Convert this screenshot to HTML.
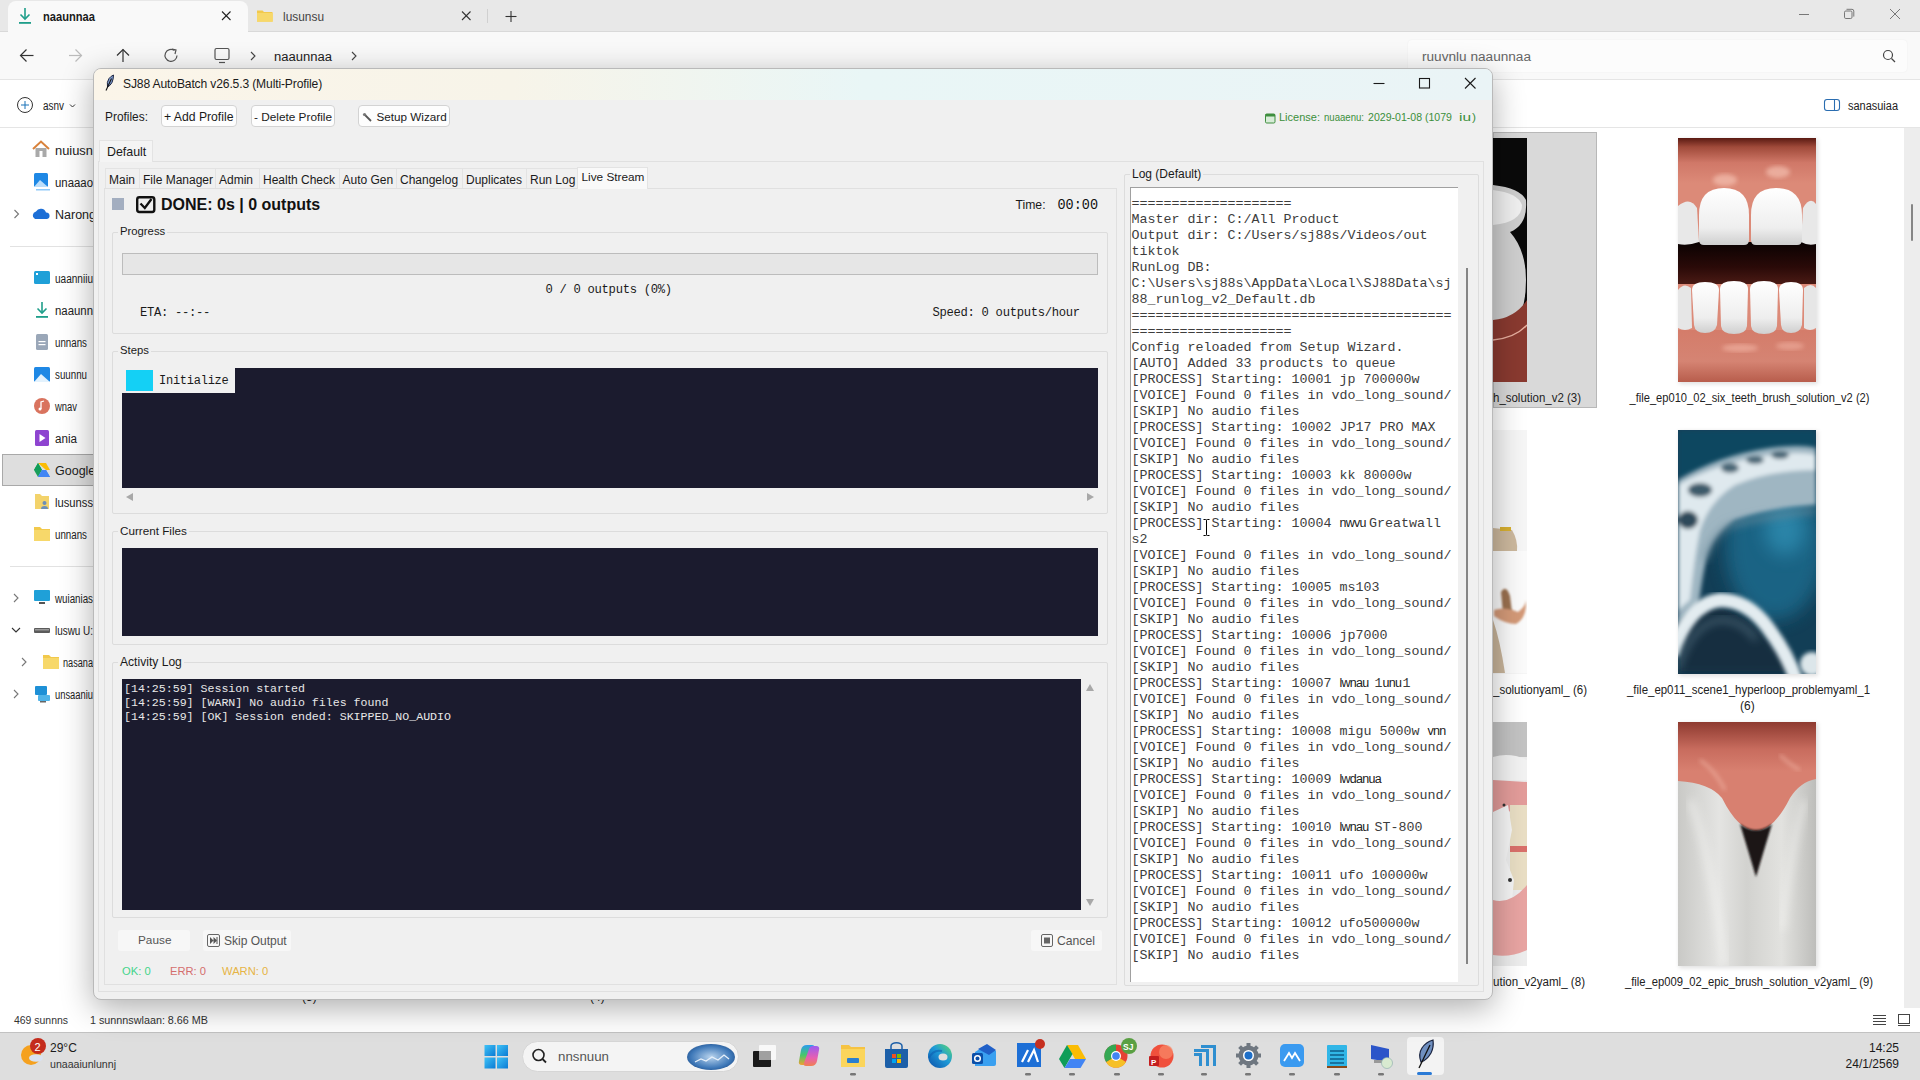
<!DOCTYPE html>
<html><head><meta charset="utf-8">
<style>
*{box-sizing:border-box;margin:0;padding:0}
html,body{width:1920px;height:1080px;overflow:hidden;background:#fff;font-family:"Liberation Sans",sans-serif;color:#1a1a1a}
.a{position:absolute}
.t{position:absolute;white-space:pre;line-height:1}
.mono{font-family:"Liberation Mono",monospace}
svg{position:absolute;overflow:visible}
.btn{background:#fdfdfd;border:1px solid #d3d3d3;border-radius:4px}
.grp{border:1px solid #dcdcdc;border-radius:2px}
.th{display:inline-block;font-family:"Liberation Sans",sans-serif;font-size:12.5px;line-height:0;vertical-align:baseline;letter-spacing:-0.7px;white-space:nowrap;color:#222}
.lbl{background:#f0f0f0;padding:0 2px}
</style></head><body>
<!-- ============ EXPLORER BACKGROUND ============ -->
<div class="a" style="left:0;top:0;width:1920px;height:32px;background:#e8e8e8"></div>
<div class="a" style="left:0;top:31px;width:1920px;height:1px;background:#d9d9d9"></div>
<div class="a" style="left:8px;top:1px;width:240px;height:32px;background:#f9f9f9;border-radius:8px 8px 0 0"></div>
<div class="a" style="left:0;top:32px;width:1920px;height:48px;background:#f9f9f9;border-bottom:1px solid #e5e5e5"></div>
<div class="a" style="left:0;top:80px;width:1920px;height:48px;background:#fff;border-bottom:1px solid #e5e5e5"></div>
<div class="a" style="left:1408px;top:40px;width:499px;height:32px;background:#fcfcfc;border-radius:4px;box-shadow:0 0 2px rgba(0,0,0,.06)"></div>
<!-- sidebar -->
<div class="a" style="left:0;top:128px;width:100px;height:877px;background:#fff"></div>
<div class="a" style="left:2px;top:456px;width:98px;height:28px;background:#e6e6e6;border-radius:4px"></div>
<!-- content -->
<div class="a" style="left:1493px;top:128px;width:427px;height:877px;background:#fff"></div>
<!-- status bar -->
<div class="a" style="left:0;top:1005px;width:1920px;height:27px;background:#fff"></div>
<!-- taskbar -->
<div class="a" style="left:0;top:1032px;width:1920px;height:48px;background:#dedede;border-top:1px solid #c2c2c2"></div>


<!-- explorer chrome icons -->
<svg style="left:0;top:0" width="1920" height="1080">
<!-- tab1 download icon -->
<g stroke="#1f9e8a" stroke-width="1.6" fill="none"><line x1="25" y1="8" x2="25" y2="19"/><path d="M20.5 14.5 L25 19 L29.5 14.5"/></g>
<rect x="19" y="22" width="12" height="1.8" fill="#1f9e8a"/>
<text x="43" y="21" font-family="Liberation Sans" font-size="12.5" font-weight="bold" fill="#1a1a1a" textLength="52" lengthAdjust="spacingAndGlyphs">naaunnaa</text>
<g stroke="#222" stroke-width="1.1"><line x1="222" y1="11.5" x2="230.5" y2="20"/><line x1="230.5" y1="11.5" x2="222" y2="20"/></g>
<!-- tab2 -->
<path d="M257 10.5 h5.5 l1.5 1.5 h8.5 v9.5 h-15.5 z" fill="#f2c94c"/><rect x="257" y="13" width="15.8" height="8.8" fill="#f7d86a"/>
<text x="283" y="21" font-family="Liberation Sans" font-size="12.5" fill="#444" textLength="41" lengthAdjust="spacingAndGlyphs">lusunsu</text>
<g stroke="#333" stroke-width="1.1"><line x1="462" y1="11.5" x2="470.5" y2="20"/><line x1="470.5" y1="11.5" x2="462" y2="20"/></g>
<line x1="487.5" y1="9" x2="487.5" y2="23" stroke="#d0d0d0" stroke-width="1"/>
<g stroke="#333" stroke-width="1.1"><line x1="511" y1="11" x2="511" y2="22"/><line x1="505.5" y1="16.5" x2="516.5" y2="16.5"/></g>
<!-- window controls -->
<line x1="1799" y1="14.5" x2="1809" y2="14.5" stroke="#777" stroke-width="1"/>
<rect x="1844.5" y="11" width="7.5" height="7.5" rx="1.3" fill="none" stroke="#777" stroke-width="1"/><path d="M1846.5 9.3 h5.5 a1.8 1.8 0 0 1 1.8 1.8 v5.5" fill="none" stroke="#777" stroke-width="1"/>
<g stroke="#777" stroke-width="1"><line x1="1890" y1="9" x2="1900" y2="19"/><line x1="1900" y1="9" x2="1890" y2="19"/></g>
<!-- nav row -->
<g stroke="#333" stroke-width="1.2" fill="none">
<line x1="21" y1="55.5" x2="33.5" y2="55.5"/><path d="M26.5 49.5 L20.5 55.5 L26.5 61.5"/>
<line x1="123" y1="49.5" x2="123" y2="62"/><path d="M117 55.5 L123 49.5 L129 55.5"/>
</g>
<g stroke="#bbb" stroke-width="1.2" fill="none"><line x1="69" y1="55.5" x2="81.5" y2="55.5"/><path d="M75.5 49.5 L81.5 55.5 L75.5 61.5"/></g>
<g stroke="#555" stroke-width="1.2" fill="none"><path d="M177 55.5 A6 6 0 1 1 174.5 50.5"/><path d="M172 49 L176 50 L175 54"/></g>
<g stroke="#555" stroke-width="1.2" fill="none"><rect x="215" y="48.5" width="14" height="11" rx="1.5"/><line x1="219" y1="62.5" x2="225" y2="62.5"/></g>
<g stroke="#444" stroke-width="1.1" fill="none"><path d="M251 52 L255 56 L251 60"/><path d="M352 52 L356 56 L352 60"/></g>
<text x="274" y="61" font-family="Liberation Sans" font-size="12.5" fill="#222" textLength="58" lengthAdjust="spacingAndGlyphs">naaunnaa</text>
<!-- search -->
<text x="1422" y="61" font-family="Liberation Sans" font-size="12.5" fill="#666" textLength="109" lengthAdjust="spacingAndGlyphs">ruuvnlu naaunnaa</text>
<g stroke="#444" stroke-width="1.2" fill="none"><circle cx="1888" cy="55" r="4.5"/><line x1="1891.5" y1="58.5" x2="1895" y2="62"/></g>
<!-- command bar -->
<g stroke="#333" stroke-width="1" fill="none"><circle cx="25" cy="105" r="7.5"/><line x1="25" y1="101" x2="25" y2="109" stroke="#1a73b8"/><line x1="21" y1="105" x2="29" y2="105" stroke="#1a73b8"/><path d="M70 104.5 L72.5 107 L75 104.5"/></g>
<text x="43" y="110" font-family="Liberation Sans" font-size="12" fill="#222" textLength="21" lengthAdjust="spacingAndGlyphs">asnv</text>
<g stroke="#2a6db0" stroke-width="1.1" fill="none"><rect x="1824.5" y="99.5" width="15" height="11" rx="2.5"/><line x1="1834.5" y1="99.5" x2="1834.5" y2="110.5"/></g>
<text x="1848" y="110" font-family="Liberation Sans" font-size="12" fill="#222" textLength="50" lengthAdjust="spacingAndGlyphs">sanasuiaa</text>
</svg>
<!-- sidebar -->
<svg style="left:0;top:0" width="1920" height="1080">
<!-- home -->
<path d="M33 149 L41 141.5 L49 149" fill="none" stroke="#d9823b" stroke-width="2"/><rect x="35.5" y="148" width="11" height="9" fill="#a9a9a9"/><rect x="39.5" y="151" width="3" height="6" fill="#fff"/>
<text x="55" y="155" font-family="Liberation Sans" font-size="12" fill="#222" textLength="38" lengthAdjust="spacingAndGlyphs">nuiusn</text>
<!-- gallery -->
<rect x="34" y="173" width="14" height="14" rx="1.5" fill="#1e88e5"/><path d="M34 187 L40 180 L48 187 Z" fill="#bbdefb"/><rect x="36" y="189" width="14" height="1.5" fill="#90caf9"/>
<text x="55" y="187" font-family="Liberation Sans" font-size="12" fill="#222" textLength="38" lengthAdjust="spacingAndGlyphs">unaaao</text>
<!-- onedrive -->
<path d="M14.5 210 L18.5 214 L14.5 218" fill="none" stroke="#777" stroke-width="1.1"/>
<path d="M35 219 a4 4 0 0 1 1-7.5 a5.5 5.5 0 0 1 10 1 a3.3 3.3 0 0 1 1 6.5 z" fill="#1d6fd6"/>
<text x="55" y="219" font-family="Liberation Sans" font-size="12.5" fill="#222">Narong</text>
<line x1="10" y1="246.5" x2="93" y2="246.5" stroke="#e2e2e2"/>
<!-- desktop -->
<rect x="34" y="271" width="16" height="13" rx="1.5" fill="#1fa0d8"/><rect x="36" y="273" width="2" height="2" fill="#fff"/>
<text x="55" y="283" font-family="Liberation Sans" font-size="12" fill="#222" textLength="38" lengthAdjust="spacingAndGlyphs">uaanniiu</text>
<!-- downloads -->
<g stroke="#1f9e8a" stroke-width="1.6" fill="none"><line x1="42" y1="302" x2="42" y2="313"/><path d="M37.5 308.5 L42 313 L46.5 308.5"/></g><rect x="36" y="316" width="12" height="1.8" fill="#1f9e8a"/>
<text x="55" y="315" font-family="Liberation Sans" font-size="12" fill="#222" textLength="38" lengthAdjust="spacingAndGlyphs">naaunn</text>
<!-- documents -->
<rect x="36" y="334" width="12" height="16" rx="1.5" fill="#9aa7b8"/><rect x="38.5" y="341" width="7" height="1.2" fill="#fff"/><rect x="38.5" y="344" width="7" height="1.2" fill="#fff"/>
<text x="55" y="347" font-family="Liberation Sans" font-size="12" fill="#222" textLength="32" lengthAdjust="spacingAndGlyphs">unnans</text>
<!-- pictures -->
<rect x="34" y="367" width="16" height="15" rx="1.5" fill="#1e88e5"/><path d="M34 382 L41 374 L50 382 Z" fill="#e3f2fd"/>
<text x="55" y="379" font-family="Liberation Sans" font-size="12" fill="#222" textLength="32" lengthAdjust="spacingAndGlyphs">suunnu</text>
<!-- music -->
<circle cx="42" cy="406" r="8" fill="#d9735e"/><path d="M41 409 v-7 l3 -1" fill="none" stroke="#fff" stroke-width="1.3"/><circle cx="40" cy="409" r="1.5" fill="#fff"/>
<text x="55" y="411" font-family="Liberation Sans" font-size="12" fill="#222" textLength="22" lengthAdjust="spacingAndGlyphs">wnav</text>
<!-- videos -->
<rect x="35" y="430" width="14" height="16" rx="1.5" fill="#8e44d0"/><path d="M39.5 434 L45.5 438 L39.5 442 Z" fill="#fff"/>
<text x="55" y="443" font-family="Liberation Sans" font-size="12" fill="#222" textLength="22" lengthAdjust="spacingAndGlyphs">ania</text>
</svg>
<div class="a" style="left:2px;top:454px;width:95px;height:32px;background:#dedede;border:1px solid #a9a9a9"></div>
<svg style="left:0;top:0" width="1920" height="1080">
<!-- google drive -->
<path d="M38 463 L46 463 L50 470 L46 470 Z" fill="#fbbc04"/><path d="M38 463 L34 470 L38 477 L42 470 Z" fill="#1a9e5c"/><path d="M38 477 L50 477 L46 470 L42 470 Z" fill="#4285f4"/><path d="M42 470 L46 470 L50 477 L38 477 Z" fill="#4285f4"/><path d="M34 470 L42 470 L38 463 Z" fill="#0f9d58"/><path d="M46 463 L50 470 L54 470" fill="none"/>
<text x="55" y="475" font-family="Liberation Sans" font-size="12.5" fill="#222">Google</text>
<!-- programs folder w/ person -->
<path d="M35 494 h5 l2 2 h7 v13 h-14 z" fill="#f3d36b"/><circle cx="44.5" cy="503" r="2" fill="#6c8fb8"/><path d="M41 509 a3.5 3 0 0 1 7 0 z" fill="#6c8fb8"/>
<text x="55" y="507" font-family="Liberation Sans" font-size="12" fill="#222" textLength="38" lengthAdjust="spacingAndGlyphs">lusunss</text>
<!-- documents folder -->
<path d="M34 527 h6 l2 2 h8 v12 h-16 z" fill="#f2c94c"/><rect x="34" y="530" width="16" height="11" fill="#f7d86a"/>
<text x="55" y="539" font-family="Liberation Sans" font-size="12" fill="#222" textLength="32" lengthAdjust="spacingAndGlyphs">unnans</text>
<line x1="10" y1="566.5" x2="93" y2="566.5" stroke="#e2e2e2"/>
<!-- this pc -->
<path d="M14 594 L18 598 L14 602" fill="none" stroke="#777" stroke-width="1.1"/>
<rect x="34" y="590" width="16" height="11" rx="1" fill="#1fa0d8"/><rect x="39" y="602" width="6" height="2" fill="#555"/>
<text x="55" y="603" font-family="Liberation Sans" font-size="12" fill="#222" textLength="38" lengthAdjust="spacingAndGlyphs">wuianias</text>
<!-- drive U -->
<path d="M12 628 L16 632 L20 628" fill="none" stroke="#333" stroke-width="1.1"/>
<rect x="34" y="628" width="16" height="5" rx="1" fill="#5b5b5b"/><rect x="35" y="629" width="14" height="1.5" fill="#999"/>
<text x="55" y="635" font-family="Liberation Sans" font-size="12" fill="#222" textLength="38" lengthAdjust="spacingAndGlyphs">luswu U:</text>
<!-- course folder -->
<path d="M22 658 L26 662 L22 666" fill="none" stroke="#777" stroke-width="1.1"/>
<path d="M43 655 h6 l2 2 h8 v12 h-16 z" fill="#f2c94c"/><rect x="43" y="658" width="16" height="11" fill="#f7d86a"/>
<text x="63" y="667" font-family="Liberation Sans" font-size="12" fill="#222" textLength="30" lengthAdjust="spacingAndGlyphs">nasana</text>
<!-- network -->
<path d="M14 690 L18 694 L14 698" fill="none" stroke="#777" stroke-width="1.1"/>
<rect x="35" y="686" width="12" height="9" rx="1" fill="#1e90d6"/><rect x="38" y="695" width="12" height="6" rx="1" fill="#4fb3e8"/><rect x="40" y="701" width="6" height="1.5" fill="#666"/>
<text x="55" y="699" font-family="Liberation Sans" font-size="12" fill="#222" textLength="38" lengthAdjust="spacingAndGlyphs">unsaaniu</text>
<!-- status bar -->
<text x="14" y="1024" font-family="Liberation Sans" font-size="11.5" fill="#333" textLength="54" lengthAdjust="spacingAndGlyphs">469 sunnns</text>
<text x="90" y="1024" font-family="Liberation Sans" font-size="11.5" fill="#333" textLength="118" lengthAdjust="spacingAndGlyphs">1 sunnnswlaan: 8.66 MB</text>
<g stroke="#444" stroke-width="1" fill="none"><line x1="1873" y1="1015.5" x2="1886" y2="1015.5"/><line x1="1873" y1="1018.5" x2="1886" y2="1018.5"/><line x1="1873" y1="1021.5" x2="1886" y2="1021.5"/><line x1="1873" y1="1024.5" x2="1886" y2="1024.5"/><rect x="1898.5" y="1014.5" width="11" height="9"/><line x1="1898" y1="1025.5" x2="1910" y2="1025.5"/></g>
</svg>


<!-- explorer content: thumbnails -->
<div class="a" style="left:1904px;top:128px;width:16px;height:880px;background:#ededed"></div>
<div class="a" style="left:1911px;top:204px;width:2px;height:37px;background:#858585;border-radius:1px"></div>
<div class="a" style="left:1493px;top:132px;width:104px;height:276px;background:#d9d9d9;border:1px solid #b8b8b8"></div>
<svg style="left:0;top:0" width="1920" height="1080">
<defs>
<linearGradient id="gA" x1="0" y1="0" x2="0" y2="1">
<stop offset="0" stop-color="#7a2e24"/><stop offset="0.12" stop-color="#b95a4b"/><stop offset="0.22" stop-color="#dc8c7b"/><stop offset="0.45" stop-color="#c87060"/><stop offset="0.6" stop-color="#2a0806"/><stop offset="0.75" stop-color="#c67264"/><stop offset="1" stop-color="#d98a7b"/>
</linearGradient>
<linearGradient id="toothG" x1="0" y1="0" x2="0" y2="1"><stop offset="0" stop-color="#ffffff"/><stop offset="0.7" stop-color="#eeeeee"/><stop offset="1" stop-color="#cfcfcf"/></linearGradient>
<radialGradient id="gB" cx="0.6" cy="0.5" r="0.7"><stop offset="0" stop-color="#2f7aa0"/><stop offset="0.6" stop-color="#1d5573"/><stop offset="1" stop-color="#0e2f45"/></radialGradient>
<linearGradient id="gC" x1="0" y1="0" x2="0" y2="1"><stop offset="0" stop-color="#8e3a30"/><stop offset="0.25" stop-color="#c86c5e"/><stop offset="0.45" stop-color="#d88070"/></linearGradient>
<linearGradient id="toothC" x1="0" y1="0" x2="1" y2="0"><stop offset="0" stop-color="#c9c9c6"/><stop offset="0.3" stop-color="#e4e4e2"/><stop offset="0.5" stop-color="#d2d2cf"/><stop offset="0.75" stop-color="#e2e2df"/><stop offset="1" stop-color="#bdbdba"/></linearGradient>
<linearGradient id="gTopA" x1="0" y1="0" x2="0" y2="1"><stop offset="0" stop-color="#5a1a12"/><stop offset="0.2" stop-color="#a04a3a"/><stop offset="0.55" stop-color="#d07868"/><stop offset="1" stop-color="#dc8a78"/></linearGradient>
<linearGradient id="gBotA" x1="0" y1="0" x2="0" y2="1"><stop offset="0" stop-color="#d47c6a"/><stop offset="0.6" stop-color="#d58473"/><stop offset="1" stop-color="#b85d4c"/></linearGradient>
<linearGradient id="gMouthA" x1="0" y1="0" x2="0" y2="1"><stop offset="0" stop-color="#0a0202"/><stop offset="0.6" stop-color="#2a0a08"/><stop offset="1" stop-color="#4a1a14"/></linearGradient>
<filter id="blur05"><feGaussianBlur stdDeviation="0.8"/></filter>
<filter id="blur1"><feGaussianBlur stdDeviation="2"/></filter>
<filter id="blur3" x="-50%" y="-50%" width="200%" height="200%"><feGaussianBlur stdDeviation="9"/></filter>
<filter id="blur2"><feGaussianBlur stdDeviation="4"/></filter>
<clipPath id="cA"><rect x="1678" y="138" width="138" height="244"/></clipPath>
<clipPath id="cB"><rect x="1678" y="430" width="138" height="244"/></clipPath>
<clipPath id="cC"><rect x="1678" y="722" width="138" height="244"/></clipPath>
<clipPath id="cL1"><rect x="1493" y="138" width="34" height="244"/></clipPath>
<clipPath id="cL2"><rect x="1493" y="430" width="34" height="244"/></clipPath>
<clipPath id="cL3"><rect x="1493" y="722" width="34" height="244"/></clipPath>
</defs>
<!-- shadows -->
<rect x="1679" y="139" width="139" height="245" fill="#000" opacity="0.12" filter="url(#blur1)"/>
<rect x="1679" y="431" width="139" height="245" fill="#000" opacity="0.12" filter="url(#blur1)"/>
<rect x="1679" y="723" width="139" height="245" fill="#000" opacity="0.12" filter="url(#blur1)"/>
<!-- thumb A: teeth -->
<g clip-path="url(#cA)">
<rect x="1678" y="138" width="138" height="244" fill="#dc8a78"/>
<rect x="1678" y="138" width="138" height="45" fill="url(#gTopA)"/>
<rect x="1678" y="330" width="138" height="52" fill="url(#gBotA)"/>
<ellipse cx="1725" cy="180" rx="12" ry="6" fill="#f4c0b0" opacity="0.7" filter="url(#blur1)"/>
<ellipse cx="1778" cy="172" rx="12" ry="6" fill="#f4c0b0" opacity="0.7" filter="url(#blur1)"/>
<rect x="1678" y="242" width="138" height="42" fill="url(#gMouthA)"/>
<!-- upper teeth -->
<path d="M1678 206 Q1690 196 1697 208 L1699 242 Q1688 246 1678 244Z" fill="#e8e8e8"/>
<path d="M1803 208 Q1810 196 1816 204 L1816 244 Q1808 246 1801 242Z" fill="#e8e8e8"/>
<path d="M1699 215 Q1699 188 1724 188 Q1749 188 1749 215 L1749 240 Q1749 245 1744 245 L1704 245 Q1699 245 1699 240Z" fill="url(#toothG)"/>
<path d="M1751 215 Q1751 188 1776 188 Q1802 188 1802 215 L1802 240 Q1802 245 1797 245 L1756 245 Q1751 245 1751 240Z" fill="url(#toothG)"/>
<!-- lower teeth -->
<path d="M1678 290 Q1684 282 1691 288 L1692 328 Q1685 332 1678 328Z" fill="#e6e6e6"/>
<path d="M1692 290 Q1692 282 1705 282 Q1719 282 1719 290 L1717 325 Q1715 333 1705 333 Q1695 333 1694 325Z" fill="url(#toothG)"/>
<path d="M1720 289 Q1720 281 1734 281 Q1748 281 1748 289 L1747 326 Q1746 334 1734 334 Q1722 334 1721 326Z" fill="url(#toothG)"/>
<path d="M1750 289 Q1750 281 1764 281 Q1778 281 1778 289 L1777 326 Q1776 334 1764 334 Q1752 334 1751 326Z" fill="url(#toothG)"/>
<path d="M1779 290 Q1779 282 1791 282 Q1803 282 1803 290 L1802 325 Q1800 333 1791 333 Q1782 333 1781 325Z" fill="url(#toothG)"/>
<path d="M1804 288 Q1811 282 1816 288 L1816 328 Q1810 332 1804 328Z" fill="#e6e6e6"/>
<ellipse cx="1740" cy="348" rx="18" ry="4" fill="#f0b0a0" opacity="0.7" filter="url(#blur1)"/>
<ellipse cx="1790" cy="346" rx="14" ry="4" fill="#f0b0a0" opacity="0.6" filter="url(#blur1)"/>
</g>
<!-- thumb B: blue -->
<g clip-path="url(#cB)">
<rect x="1678" y="430" width="138" height="244" fill="#123e56"/>
<ellipse cx="1775" cy="545" rx="50" ry="75" fill="#1d6d90" opacity="0.8" filter="url(#blur3)"/>
<ellipse cx="1785" cy="530" rx="20" ry="25" fill="#3aa6cc" opacity="0.5" filter="url(#blur3)"/>
<path d="M1678 430 L1816 430 L1816 450 Q1740 455 1678 480Z" fill="#0f4660" filter="url(#blur1)"/>
<g filter="url(#blur1)">
<path d="M1678 480 Q1720 455 1770 448 Q1800 444 1816 448 L1816 505 Q1770 508 1735 520 Q1712 535 1706 560 Q1700 590 1698 612 L1678 625Z" fill="#9fb6c2"/>
<path d="M1678 485 Q1720 462 1770 455 Q1800 451 1816 455 L1816 470 Q1770 470 1735 485 Q1710 500 1700 530 Q1694 560 1690 600 L1678 610Z" fill="#dfe9ee"/>
<ellipse cx="1780" cy="455" rx="9" ry="4" fill="#4a6676"/><ellipse cx="1755" cy="460" rx="9" ry="4" fill="#4a6676"/><ellipse cx="1730" cy="468" rx="9" ry="5" fill="#4a6676"/>
<ellipse cx="1700" cy="490" rx="12" ry="7" fill="#3e5a6a"/><ellipse cx="1688" cy="520" rx="10" ry="9" fill="#2e4a5a"/>
</g>
<path d="M1816 510 Q1770 515 1730 525 Q1712 535 1705 560" fill="none" stroke="#6f8d9c" stroke-width="4" filter="url(#blur2)"/>
<path d="M1678 674 L1678 625 Q1700 605 1720 607 Q1745 611 1765 635 Q1785 660 1800 674Z" fill="#152f40" filter="url(#blur2)"/>
<path d="M1672 655 Q1688 604 1720 600 Q1748 600 1768 628 Q1788 655 1796 680" fill="none" stroke="#e3ecf0" stroke-width="14" filter="url(#blur1)"/>
<path d="M1678 668 Q1692 624 1720 620 Q1742 620 1756 640" fill="none" stroke="#5f7d8d" stroke-width="3" filter="url(#blur2)"/>
<ellipse cx="1812" cy="664" rx="12" ry="12" fill="#dce6ea" filter="url(#blur1)"/>
</g>
<!-- thumb C: V gum -->
<g clip-path="url(#cC)">
<rect x="1678" y="722" width="138" height="244" fill="url(#toothC)"/>
<path d="M1690 800 Q1710 850 1725 966" stroke="#f6f6f4" stroke-width="8" fill="none" opacity="0.5" filter="url(#blur2)"/>
<path d="M1805 800 Q1790 850 1782 930" stroke="#f6f6f4" stroke-width="7" fill="none" opacity="0.5" filter="url(#blur2)"/>
<path d="M1678 722 L1816 722 L1816 779 Q1800 782 1790 798 Q1774 830 1756 831 Q1738 830 1722 798 Q1710 783 1678 781Z" fill="url(#gC)"/>
<path d="M1700 760 Q1715 770 1725 790" stroke="#f2b8a8" stroke-width="3" fill="none" opacity="0.6" filter="url(#blur1)"/>
<path d="M1780 755 Q1790 765 1800 770" stroke="#f2b8a8" stroke-width="3" fill="none" opacity="0.6" filter="url(#blur1)"/>
<path d="M1740 824 Q1756 836 1772 824 Q1764 850 1756 877 Q1748 850 1740 824Z" fill="#1a1414" filter="url(#blur05)"/>
<path d="M1756 876 L1756 966" stroke="#b0b0ac" stroke-width="3" filter="url(#blur1)"/>
</g>
<!-- left partial thumbs -->
<g clip-path="url(#cL1)">
<rect x="1493" y="138" width="34" height="244" fill="#0a0a0a"/>
<path d="M1493 185 Q1520 188 1526 200 Q1528 225 1510 232 Q1526 250 1526 280 Q1526 315 1510 330 L1493 332Z" fill="#cfcfcf"/>
<path d="M1493 190 Q1518 193 1522 205 Q1522 222 1493 225Z" fill="#f0f0f0"/>
<path d="M1493 320 Q1515 318 1527 300 L1527 382 L1493 382Z" fill="#8a3a30"/>
<path d="M1493 340 Q1515 338 1527 325" stroke="#e8b0a0" stroke-width="1.5" fill="none"/>
</g>
<g clip-path="url(#cL2)">
<rect x="1493" y="430" width="34" height="244" fill="#f6f6f6"/>
<path d="M1493 528 L1512 530 Q1518 540 1517 551 L1493 551Z" fill="#cdb99e"/>
<rect x="1500" y="527" width="11" height="4" fill="#d8b030"/>
<rect x="1493" y="551" width="34" height="122" fill="#fbfbfb"/>
<path d="M1501 592 Q1506 584 1510 596 L1512 612 L1503 614Z" fill="#9a7050" filter="url(#blur05)"/><path d="M1494 610 Q1505 606 1518 612 Q1526 606 1526 600 Q1527 618 1516 624 Q1505 624 1494 616Z" fill="#d49a78" filter="url(#blur05)"/>
<path d="M1493 620 Q1500 640 1505 673 L1493 673Z" fill="#c9b59b"/>
</g>
<g clip-path="url(#cL3)">
<rect x="1493" y="722" width="34" height="244" fill="#ededed"/>
<rect x="1493" y="722" width="34" height="35" fill="#c3c3c3"/>
<path d="M1493 757 Q1510 752 1527 760 L1527 780 L1493 780Z" fill="#f2f2f2"/>
<path d="M1493 780 L1527 782 L1527 805 Q1515 815 1505 810 L1493 815Z" fill="#e39c9a"/>
<rect x="1510" y="805" width="17" height="85" fill="#e9dec4"/>
<rect x="1510" y="846" width="17" height="6" fill="#d9706a"/>
<path d="M1493 812 L1508 805 L1512 830 L1506 860 L1514 880 L1512 900 L1493 905Z" fill="#f5f5f5"/>
<circle cx="1504" cy="805" r="1.5" fill="#333"/><circle cx="1510" cy="880" r="2" fill="#333"/>
<path d="M1493 900 Q1510 905 1527 885 L1527 950 Q1510 958 1493 955Z" fill="#e8a4a2"/>
</g>
<!-- labels -->
<text x="1493" y="402" font-family="Liberation Sans" font-size="12" fill="#222" textLength="88" lengthAdjust="spacingAndGlyphs">h_solution_v2 (3)</text>
<text x="1629.5" y="402" font-family="Liberation Sans" font-size="12" fill="#222" textLength="240" lengthAdjust="spacingAndGlyphs">_file_ep010_02_six_teeth_brush_solution_v2 (2)</text>
<text x="1493" y="694" font-family="Liberation Sans" font-size="12" fill="#222" textLength="94" lengthAdjust="spacingAndGlyphs">_solutionyaml_ (6)</text>
<text x="1627" y="694" font-family="Liberation Sans" font-size="12" fill="#222" textLength="243" lengthAdjust="spacingAndGlyphs">_file_ep011_scene1_hyperloop_problemyaml_1</text>
<text x="1740" y="710" font-family="Liberation Sans" font-size="12" fill="#222">(6)</text>
<text x="1493" y="986" font-family="Liberation Sans" font-size="12" fill="#222" textLength="92" lengthAdjust="spacingAndGlyphs">ution_v2yaml_ (8)</text>
<text x="1625" y="986" font-family="Liberation Sans" font-size="12" fill="#222" textLength="248" lengthAdjust="spacingAndGlyphs">_file_ep009_02_epic_brush_solution_v2yaml_ (9)</text>
</svg>


<!-- taskbar content -->
<svg style="left:0;top:0" width="1920" height="1080">
<defs>
<linearGradient id="winG" x1="0" y1="0" x2="1" y2="1"><stop offset="0" stop-color="#3fc3f7"/><stop offset="1" stop-color="#0a7ad4"/></linearGradient>
<linearGradient id="copG1" x1="0" y1="0" x2="0" y2="1"><stop offset="0" stop-color="#2b9bf0"/><stop offset="0.5" stop-color="#46c86a"/><stop offset="1" stop-color="#f0a030"/></linearGradient><linearGradient id="copG2" x1="0" y1="0" x2="0" y2="1"><stop offset="0" stop-color="#9a5cf0"/><stop offset="0.6" stop-color="#e860b0"/><stop offset="1" stop-color="#f08050"/></linearGradient><linearGradient id="copG" x1="0" y1="0" x2="1" y2="1"><stop offset="0" stop-color="#2aa8f0"/><stop offset="0.5" stop-color="#b55de0"/><stop offset="1" stop-color="#f08a30"/></linearGradient>
<linearGradient id="edgeG" x1="1" y1="0" x2="0" y2="1"><stop offset="0" stop-color="#5fdc6a"/><stop offset="0.45" stop-color="#1e9ad8"/><stop offset="1" stop-color="#0b4fa8"/></linearGradient>
<radialGradient id="searchImg" cx="0.5" cy="0.5" r="0.6"><stop offset="0" stop-color="#b9d4ee"/><stop offset="0.7" stop-color="#3e78b8"/><stop offset="1" stop-color="#1d4b86"/></radialGradient>
</defs>
<!-- weather -->
<circle cx="31" cy="1055" r="10" fill="#f5a11f"/><ellipse cx="36" cy="1058" rx="7" ry="3.8" fill="#d9e2f0"/>
<circle cx="38" cy="1046" r="8" fill="#c42b1c"/><text x="34.5" y="1050.5" font-family="Liberation Sans" font-size="11" fill="#fff">2</text>
<text x="50" y="1052" font-family="Liberation Sans" font-size="12" fill="#1a1a1a">29°C</text>
<text x="50" y="1068" font-family="Liberation Sans" font-size="11.5" fill="#333" textLength="66" lengthAdjust="spacingAndGlyphs">unaaaiunlunnj</text>
<!-- start -->
<rect x="484.5" y="1045" width="11" height="11" fill="url(#winG)"/><rect x="497" y="1045" width="11" height="11" fill="url(#winG)"/><rect x="484.5" y="1057.5" width="11" height="11" fill="url(#winG)"/><rect x="497" y="1057.5" width="11" height="11" fill="url(#winG)"/>
<!-- search pill -->
<rect x="522.5" y="1041.5" width="216" height="30" rx="15" fill="#f4f4f4" stroke="#d6d6d6"/>
<circle cx="538.5" cy="1055" r="5.5" fill="none" stroke="#222" stroke-width="1.6"/><line x1="542.5" y1="1059" x2="546" y2="1062.5" stroke="#222" stroke-width="1.8"/>
<text x="558" y="1061" font-family="Liberation Sans" font-size="12" fill="#555" textLength="51" lengthAdjust="spacingAndGlyphs">nnsnuun</text>
<ellipse cx="711" cy="1057" rx="24" ry="13" fill="url(#searchImg)"/>
<path d="M695 1062 l6 -3 l5 2 l6 -4 l6 3 l6 -5 l5 4" fill="none" stroke="#e6f0fa" stroke-width="1.3"/>
<!-- task view -->
<rect x="753" y="1051" width="18" height="16" rx="1" fill="#1a1a1a"/><rect x="759" y="1045" width="17" height="15" rx="1" fill="#f8f8f8"/><rect x="759" y="1051" width="12" height="9" fill="#a0a0a0"/>
<!-- copilot -->
<path d="M801 1050 q1 -5 6 -5 h5 q3 0 2 3 l-5 14 q-1 3 -4 3 h-3 q-4 0 -3 -4z" fill="url(#copG1)"/><path d="M817 1061 q-1 5 -6 5 h-5 q-3 0 -2 -3 l5 -14 q1 -3 4 -3 h3 q4 0 3 4z" fill="url(#copG2)"/>
<!-- explorer -->
<path d="M841 1045 h8 l2 2 h14 v20 h-24z" fill="#f6c343"/><rect x="841" y="1049" width="24" height="18" fill="#fbd55b"/><rect x="847" y="1058" width="12" height="5" rx="1" fill="#2a7fcf"/>
<rect x="850" y="1073" width="6" height="2.5" rx="1.2" fill="#777"/>
<!-- store -->
<path d="M885 1049 h23 v17 a2 2 0 0 1 -2 2 h-19 a2 2 0 0 1 -2 -2z" fill="#1c5fa8"/><path d="M891 1049 v-3 a5 3 0 0 1 11 0 v3" fill="none" stroke="#1c5fa8" stroke-width="1.5"/>
<rect x="892" y="1054" width="4" height="4" fill="#f25022"/><rect x="897" y="1054" width="4" height="4" fill="#7fba00"/><rect x="892" y="1059" width="4" height="4" fill="#00a4ef"/><rect x="897" y="1059" width="4" height="4" fill="#ffb900"/>
<!-- edge -->
<circle cx="940" cy="1056" r="12" fill="url(#edgeG)"/><ellipse cx="943" cy="1057" rx="4.5" ry="3.5" fill="#dedede"/><path d="M929 1058 q4 -9 13 -7" fill="none" stroke="#0e5fb0" stroke-width="2" opacity="0.6"/>
<!-- outlook -->
<path d="M975 1052 l11 -7 l10 6 v13 q0 2 -2 2 h-19z" fill="#3aa0f0"/><path d="M978 1049 l9 -5 l9 6 l-7 5z" fill="#2060c8"/><rect x="972" y="1053" width="11" height="11" rx="1.5" fill="#0b4fa8"/><circle cx="977.5" cy="1058.5" r="2.8" fill="none" stroke="#fff" stroke-width="1.5"/>
<!-- ai app -->
<rect x="1017" y="1043" width="24" height="24" fill="#1d6fd6"/><path d="M1022 1062 l6 -12 M1028 1062 l6 -12 l4 12" stroke="#fff" stroke-width="2.2" fill="none"/>
<circle cx="1040" cy="1044" r="5" fill="#c62f1f"/>
<rect x="1025" y="1073" width="6" height="2.5" rx="1.2" fill="#777"/>
<!-- drive -->
<path d="M1067 1045 h11 l8 14 h-11z" fill="#fbbc04"/><path d="M1067 1045 l-8 14 l5.5 9 l8 -14z" fill="#0f9d58"/><path d="M1064.5 1068 h16 l5.5 -9 h-16z" fill="#4285f4"/>
<rect x="1069" y="1073" width="6" height="2.5" rx="1.2" fill="#777"/>
<!-- chrome -->
<circle cx="1116" cy="1056" r="11.5" fill="#e54335"/><path d="M1116 1056 L1126 1062 A11.5 11.5 0 0 1 1106 1062 Z" fill="#f6c026"/><path d="M1116 1056 L1106 1062 A11.5 11.5 0 0 1 1116 1044.5Z" fill="#34a853"/><circle cx="1116" cy="1056" r="5" fill="#fff"/><circle cx="1116" cy="1056" r="3.8" fill="#4285f4"/>
<circle cx="1129" cy="1046" r="8" fill="#5aa043"/><text x="1123" y="1050" font-family="Liberation Sans" font-size="8.5" font-weight="bold" fill="#fff">SJ</text>
<rect x="1114" y="1073" width="6" height="2.5" rx="1.2" fill="#777"/>
<!-- pdf -->
<circle cx="1162" cy="1056" r="11.5" fill="#f0503c"/><circle cx="1166" cy="1052" r="7" fill="#f88a6a" opacity="0.7"/><rect x="1149" y="1056" width="10" height="10" rx="1" fill="#c41e1e"/><text x="1151" y="1064.5" font-family="Liberation Sans" font-size="8" font-weight="bold" fill="#fff">P</text>
<rect x="1158" y="1073" width="6" height="2.5" rx="1.2" fill="#777"/>
<!-- S logo -->
<path d="M1194 1045 h22 v21 h-3 v-18 h-12 v-3z M1194 1049 h15 v17 h-3 v-14 h-12z M1194 1053 h8 v13 h-3 v-10 h-5z" fill="#2f8fd0"/>
<rect x="1201" y="1073" width="6" height="2.5" rx="1.2" fill="#777"/>
<!-- settings -->
<circle cx="1248.5" cy="1055.5" r="10" fill="#6f7780"/><g stroke="#6f7780" stroke-width="4"><line x1="1248.5" y1="1043" x2="1248.5" y2="1068"/><line x1="1236" y1="1055.5" x2="1261" y2="1055.5"/><line x1="1239.6" y1="1046.6" x2="1257.4" y2="1064.4"/><line x1="1257.4" y1="1046.6" x2="1239.6" y2="1064.4"/></g><circle cx="1248.5" cy="1055.5" r="5.5" fill="#fff"/><circle cx="1248.5" cy="1055.5" r="4" fill="#1e6fc8"/>
<rect x="1245" y="1073" width="6" height="2.5" rx="1.2" fill="#777"/>
<!-- blue app -->
<rect x="1280" y="1044" width="24" height="23" rx="5" fill="#3a9af0"/><path d="M1284 1061 l5 -8 l3 5 l3 -5 l5 8" stroke="#fff" stroke-width="1.8" fill="none"/>
<rect x="1289" y="1073" width="6" height="2.5" rx="1.2" fill="#777"/>
<!-- notepad -->
<rect x="1327" y="1045" width="20" height="22" rx="1" fill="#31b6e7"/><rect x="1327" y="1066" width="20" height="2" fill="#8a4a1a"/><g stroke="#0a4f7a" stroke-width="1.3"><line x1="1330" y1="1051" x2="1344" y2="1051"/><line x1="1330" y1="1055" x2="1344" y2="1055"/><line x1="1330" y1="1059" x2="1344" y2="1059"/><line x1="1330" y1="1063" x2="1344" y2="1063"/></g>
<rect x="1334" y="1073" width="6" height="2.5" rx="1.2" fill="#777"/>
<!-- remote desktop -->
<path d="M1371 1045 l18 4 v13 l-18 -3z" fill="#2b55c9"/><rect x="1374" y="1060" width="8" height="3" fill="#999"/><circle cx="1387" cy="1063" r="5.5" fill="#d8ead0" stroke="#8aa" stroke-width="0.6"/>
<rect x="1378" y="1073" width="6" height="2.5" rx="1.2" fill="#777"/>
<!-- feather active -->
<rect x="1407" y="1037" width="37" height="38" rx="4" fill="#f3f3f3"/>
<path d="M1421 1062 Q1418 1054 1422 1048 Q1426 1042 1433 1040 Q1434 1047 1431 1053 Q1427 1060 1421 1062Z" fill="#6f8fc0" stroke="#1a2440" stroke-width="1.2"/><path d="M1419 1068 L1430 1045" stroke="#111" stroke-width="1.3"/>
<rect x="1417" y="1072" width="15" height="3" rx="1.5" fill="#2a7ad6"/>
<!-- clock -->
<text x="1899" y="1052" text-anchor="end" font-family="Liberation Sans" font-size="12" fill="#1a1a1a">14:25</text>
<text x="1899" y="1068" text-anchor="end" font-family="Liberation Sans" font-size="12" fill="#1a1a1a">24/1/2569</text>
</svg>


<!-- partial labels under window -->
<svg style="left:0;top:0" width="1920" height="1080"><g font-family="Liberation Sans" font-size="12" fill="#222"><text x="302" y="1001">(5)</text><text x="590" y="1001">(4)</text></g></svg>
<!-- ============ APP WINDOW ============ -->
<div class="a" id="win" style="left:93px;top:68px;width:1400px;height:932px;background:#f0f0f0;border:1px solid #b9b9b9;border-radius:8px;box-shadow:0 8px 32px rgba(0,0,0,.32)"></div>
<div class="a" style="left:94px;top:69px;width:1398px;height:31px;border-radius:7px 7px 0 0;background:linear-gradient(90deg,#fbf5e9 0%,#f7f4e9 30%,#e9f6f6 55%,#eaf4f6 100%)"></div>
<div class="t" style="left:123px;top:77.5px;font-size:12.1px;letter-spacing:-0.14px">SJ88 AutoBatch v26.5.3 (Multi-Profile)</div>


<!-- title controls -->
<svg style="left:0;top:0" width="1920" height="1080">
<g stroke="#1a1a1a" stroke-width="1.1" fill="none">
<line x1="1373.5" y1="83.5" x2="1384.5" y2="83.5"/>
<rect x="1419.5" y="78.5" width="10" height="9.5"/>
<line x1="1465" y1="78" x2="1475.5" y2="88.5"/><line x1="1475.5" y1="78" x2="1465" y2="88.5"/>
</g>
<!-- feather icon -->
<path d="M107.5 87 Q106.5 82 109 78.5 Q111 76 113.5 75 Q113.5 79 112 82.5 Q110 86 107.5 87Z" fill="#7d9bd0" stroke="#1d2540" stroke-width="1"/><path d="M106 90.5 L111.5 78.5" stroke="#111" stroke-width="1.1"/>
</svg>
<div class="t" style="left:105px;top:111.5px;font-size:11.9px">Profiles:</div>
<div class="a btn" style="left:161px;top:105px;width:76px;height:22px"></div>
<div class="t" style="left:164px;top:111px;font-size:12.2px">+ Add Profile</div>
<div class="a btn" style="left:251px;top:105px;width:84px;height:22px"></div>
<div class="t" style="left:254px;top:111.5px;font-size:11.8px">- Delete Profile</div>
<div class="a btn" style="left:358px;top:105px;width:92px;height:22px"></div>
<svg style="left:0;top:0" width="1920" height="1080"><path d="M364.5 114.5 L371 121" stroke="#555" stroke-width="1.8"/><circle cx="364.5" cy="114.5" r="1.6" fill="#777"/></svg>
<div class="t" style="left:376.5px;top:110.5px;font-size:11.7px">Setup Wizard</div>
<svg style="left:0;top:0" width="1920" height="1080"><rect x="1265.5" y="114" width="9.5" height="9" rx="1.2" fill="#d8ecd8" stroke="#3e8e3e" stroke-width="1"/><rect x="1265.5" y="114" width="9.5" height="2.5" fill="#3e8e3e"/></svg>
<svg style="left:0;top:0" width="1920" height="1080"><g font-family="Liberation Sans" font-size="11.8" fill="#3b8f3b">
<text x="1279" y="121" textLength="41" lengthAdjust="spacingAndGlyphs">License:</text>
<text x="1324" y="121" font-size="11" textLength="40" lengthAdjust="spacingAndGlyphs">nuaaenu:</text>
<text x="1368" y="121" textLength="84" lengthAdjust="spacingAndGlyphs">2029-01-08 (1079</text>
<text x="1459" y="121" font-size="11" textLength="12" lengthAdjust="spacingAndGlyphs">iu</text>
<text x="1472" y="121">)</text></g></svg>

<!-- outer notebook -->
<div class="a" style="left:98px;top:161px;width:1386px;height:831px;border:1px solid #e0e0e0;background:#f0f0f0"></div>
<div class="a" style="left:99px;top:140px;width:54px;height:22px;background:#f4f4f4;border:1px solid #e3e3e3;border-bottom:none"></div>
<div class="t" style="left:107px;top:145.5px;font-size:12.4px">Default</div>

<!-- inner notebook -->
<div class="a" style="left:104px;top:188px;width:1013px;height:797px;border:1px solid #e0e0e0"></div>
<div class="a" style="left:105px;top:168px;width:34px;height:20px;background:#f0f0f0;border:1px solid #e3e3e3;border-right:none;border-bottom:none"></div>
<div class="t" style="left:109px;top:173.5px;font-size:12px">Main</div>
<div class="a" style="left:139px;top:168px;width:76px;height:20px;background:#f0f0f0;border:1px solid #e3e3e3;border-right:none;border-bottom:none"></div>
<div class="t" style="left:143px;top:173.5px;font-size:12px">File Manager</div>
<div class="a" style="left:215px;top:168px;width:44px;height:20px;background:#f0f0f0;border:1px solid #e3e3e3;border-right:none;border-bottom:none"></div>
<div class="t" style="left:219px;top:173.5px;font-size:12px">Admin</div>
<div class="a" style="left:259px;top:168px;width:79.5px;height:20px;background:#f0f0f0;border:1px solid #e3e3e3;border-right:none;border-bottom:none"></div>
<div class="t" style="left:263px;top:173.5px;font-size:12px">Health Check</div>
<div class="a" style="left:338.5px;top:168px;width:57.5px;height:20px;background:#f0f0f0;border:1px solid #e3e3e3;border-right:none;border-bottom:none"></div>
<div class="t" style="left:342.5px;top:173.5px;font-size:12px">Auto Gen</div>
<div class="a" style="left:396px;top:168px;width:66px;height:20px;background:#f0f0f0;border:1px solid #e3e3e3;border-right:none;border-bottom:none"></div>
<div class="t" style="left:400px;top:173.5px;font-size:12px">Changelog</div>
<div class="a" style="left:462px;top:168px;width:64px;height:20px;background:#f0f0f0;border:1px solid #e3e3e3;border-right:none;border-bottom:none"></div>
<div class="t" style="left:466px;top:173.5px;font-size:12px">Duplicates</div>
<div class="a" style="left:526px;top:168px;width:51px;height:20px;background:#f0f0f0;border:1px solid #e3e3e3;border-right:none;border-bottom:none"></div>
<div class="t" style="left:530px;top:173.5px;font-size:12px">Run Log</div>
<div class="a" style="left:577px;top:167px;width:71px;height:22px;background:#f9f9f9;border:1px solid #e3e3e3;border-bottom:none"></div>
<div class="t" style="left:581.5px;top:171.5px;font-size:11.8px">Live Stream</div>

<!-- status line -->
<div class="a" style="left:112px;top:198px;width:12px;height:12px;background:#a3aec0"></div>
<svg style="left:0;top:0" width="1920" height="1080"><rect x="137.2" y="197.2" width="17.1" height="14.8" rx="2.2" fill="none" stroke="#111" stroke-width="2.4"/><path d="M140.5 203.5 L144.8 208 L151.5 199" fill="none" stroke="#111" stroke-width="2.3"/></svg>
<div class="t" style="left:161px;top:196.5px;font-size:16px;font-weight:bold;color:#111">DONE: 0s | 0 outputs</div>
<div class="t" style="left:1015.5px;top:199px;font-size:12.2px">Time:</div>
<svg style="left:0;top:0" width="1920" height="1080"><text x="1057.5" y="209" font-family="Liberation Mono" font-size="15.5" fill="#111" textLength="40.5" lengthAdjust="spacingAndGlyphs">00:00</text></svg>

<!-- Progress group -->
<div class="a grp" style="left:112px;top:232px;width:996px;height:102px"></div>
<div class="t lbl" style="left:118px;top:226px;font-size:11.3px">Progress</div>
<div class="a" style="left:122px;top:253px;width:976px;height:22px;background:#e6e6e6;border:1px solid #bcbcbc"></div>
<div class="t mono" style="left:545.5px;top:283.5px;font-size:12.2px;letter-spacing:-0.3px">0 / 0 outputs (0%)</div>
<div class="t mono" style="left:140px;top:307px;font-size:12.2px;letter-spacing:-0.3px">ETA: --:--</div>
<div class="t mono" style="left:932.5px;top:307px;font-size:12.2px;letter-spacing:-0.3px">Speed: 0 outputs/hour</div>

<!-- Steps group -->
<div class="a grp" style="left:112px;top:351px;width:996px;height:163px"></div>
<div class="t lbl" style="left:118px;top:345px;font-size:11.3px">Steps</div>
<div class="a" style="left:122px;top:368px;width:976px;height:120px;background:#1b1b2e"></div>
<div class="a" style="left:122px;top:368px;width:113px;height:25px;background:#f0f0f0"></div>
<div class="a" style="left:126px;top:370px;width:27px;height:21px;background:#14d0f5"></div>
<div class="t mono" style="left:159px;top:375px;font-size:12px;letter-spacing:-0.25px">Initialize</div>
<svg style="left:0;top:0" width="1920" height="1080"><path d="M126 497 L133 493 L133 501 Z" fill="#a8a8a8"/><path d="M1094 497 L1087 493 L1087 501 Z" fill="#a8a8a8"/></svg>

<!-- Current files group -->
<div class="a grp" style="left:112px;top:531px;width:996px;height:114px"></div>
<div class="t lbl" style="left:118px;top:525px;font-size:11.7px">Current Files</div>
<div class="a" style="left:122px;top:548px;width:976px;height:88px;background:#1b1b2e"></div>

<!-- Activity log group -->
<div class="a grp" style="left:112px;top:662px;width:996px;height:256px"></div>
<div class="t lbl" style="left:118px;top:656px;font-size:12.1px">Activity Log</div>
<div class="a" style="left:122px;top:679px;width:959px;height:231px;background:#1b1b2e"></div>
<div class="t mono" style="left:124px;top:682px;font-size:11.6px;line-height:14px;color:#e8e8e8">[14:25:59] Session started
[14:25:59] [WARN] No audio files found
[14:25:59] [OK] Session ended: SKIPPED_NO_AUDIO</div>
<svg style="left:0;top:0" width="1920" height="1080"><path d="M1090 684 L1094 691 L1086 691 Z" fill="#a8a8a8"/><path d="M1090 906 L1094 899 L1086 899 Z" fill="#a8a8a8"/></svg>

<!-- bottom buttons -->
<div class="a" style="left:118px;top:930px;width:72px;height:21px;background:#f7f7f7;border-radius:3px"></div>
<div class="t" style="left:138px;top:934.5px;font-size:11.8px;color:#555">Pause</div>
<div class="a" style="left:203px;top:930px;width:88px;height:21px;background:#f7f7f7;border-radius:3px"></div>
<svg style="left:0;top:0" width="1920" height="1080"><rect x="207.5" y="934.5" width="12" height="12" rx="1.5" fill="none" stroke="#666" stroke-width="1"/><path d="M210 937 L213.5 940.5 L210 944 Z M213.5 937 L217 940.5 L213.5 944 Z" fill="#555"/><rect x="216.5" y="937" width="1" height="7" fill="#555"/></svg>
<div class="t" style="left:224px;top:934.5px;font-size:12px;color:#555">Skip Output</div>
<div class="a" style="left:1031px;top:930px;width:71px;height:21px;background:#f7f7f7;border-radius:3px"></div>
<svg style="left:0;top:0" width="1920" height="1080"><rect x="1041.5" y="934.5" width="11" height="12" rx="1.5" fill="none" stroke="#666" stroke-width="1"/><rect x="1044" y="937.5" width="6" height="6" fill="#666"/></svg>
<div class="t" style="left:1057px;top:934.5px;font-size:12.2px;color:#555">Cancel</div>
<div class="t" style="left:122px;top:965.5px;font-size:11.2px;color:#45d48a">OK: 0</div>
<div class="t" style="left:170px;top:965.5px;font-size:11.2px;color:#d46e6e">ERR: 0</div>
<div class="t" style="left:222px;top:965.5px;font-size:11.2px;color:#e6b445">WARN: 0</div>

<!-- Log panel -->
<div class="a grp" style="left:1124px;top:174px;width:355px;height:812px"></div>
<div class="t lbl" style="left:1130px;top:168px;font-size:12px">Log (Default)</div>
<div class="a" style="left:1130px;top:187px;width:328px;height:795px;background:#fff;border-left:1px solid #a0a0a0;border-top:1px solid #a0a0a0"></div>
<div class="a" style="left:1466px;top:268px;width:2px;height:696px;background:#858585"></div>

<div class="t mono" style="left:1131.5px;top:195.5px;font-size:13.33px;line-height:16px;color:#3d3d3d">====================
Master dir: C:/All Product
Output dir: C:/Users/sj88s/Videos/out
tiktok
RunLog DB:
C:\Users\sj88s\AppData\Local\SJ88Data\sj
88_runlog_v2_Default.db
========================================
====================
Config reloaded from Setup Wizard.
[AUTO] Added 33 products to queue
[PROCESS] Starting: 10001 jp 700000w
[VOICE] Found 0 files in vdo_long_sound/
[SKIP] No audio files
[PROCESS] Starting: 10002 JP17 PRO MAX
[VOICE] Found 0 files in vdo_long_sound/
[SKIP] No audio files
[PROCESS] Starting: 10003 kk 80000w
[VOICE] Found 0 files in vdo_long_sound/
[SKIP] No audio files
[PROCESS] Starting: 10004 <span class="th" style="width:21.5px">nwvu</span> Greatwall
s2
[VOICE] Found 0 files in vdo_long_sound/
[SKIP] No audio files
[PROCESS] Starting: 10005 ms103
[VOICE] Found 0 files in vdo_long_sound/
[SKIP] No audio files
[PROCESS] Starting: 10006 jp7000
[VOICE] Found 0 files in vdo_long_sound/
[SKIP] No audio files
[PROCESS] Starting: 10007 <span class="th" style="width:27px">lwnau</span> 1<span class="th" style="width:20px">unu</span>1
[VOICE] Found 0 files in vdo_long_sound/
[SKIP] No audio files
[PROCESS] Starting: 10008 migu 5000w <span class="th" style="width:19px">vnn</span>
[VOICE] Found 0 files in vdo_long_sound/
[SKIP] No audio files
[PROCESS] Starting: 10009 <span class="th" style="width:55px">lwdanua</span>
[VOICE] Found 0 files in vdo_long_sound/
[SKIP] No audio files
[PROCESS] Starting: 10010 <span class="th" style="width:27px">lwnau</span> ST-800
[VOICE] Found 0 files in vdo_long_sound/
[SKIP] No audio files
[PROCESS] Starting: 10011 ufo 100000w
[VOICE] Found 0 files in vdo_long_sound/
[SKIP] No audio files
[PROCESS] Starting: 10012 ufo500000w
[VOICE] Found 0 files in vdo_long_sound/
[SKIP] No audio files</div>

<svg style="left:0;top:0" width="1920" height="1080"><g stroke="#000" stroke-width="1" fill="none"><path d="M1203.5 519.5 h2 q1 0 1 1 v14 q0 1 -1 1 h-2 M1209.5 519.5 h-2 q-1 0 -1 1 M1206.5 534.5 q0 1 1 1 h2"/></g></svg>
</body></html>
